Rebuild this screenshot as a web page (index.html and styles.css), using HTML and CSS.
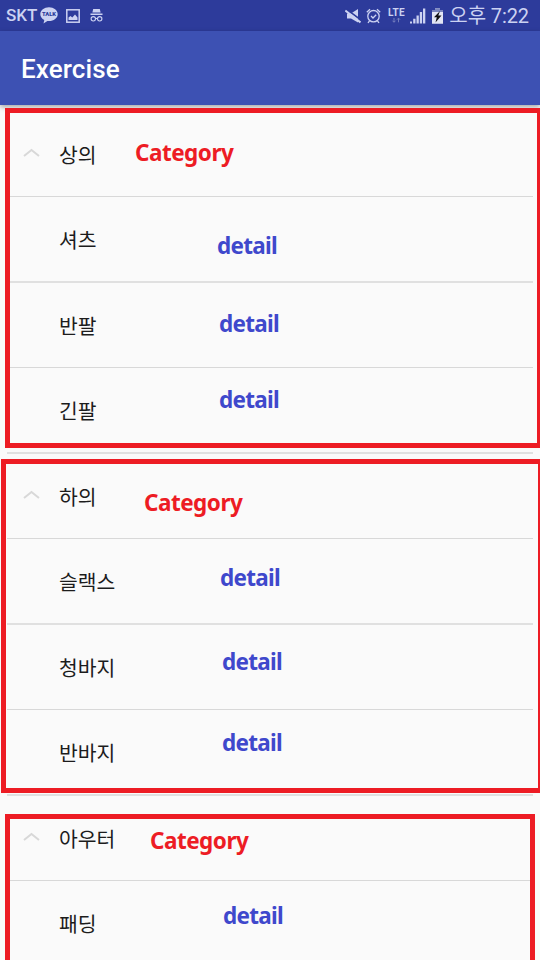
FILE: index.html
```html
<!DOCTYPE html>
<html lang="ko">
<head>
    <meta charset="UTF-8">
    <meta name="viewport" content="width=device-width, initial-scale=1.0">
    <title>Exercise</title>
    <link rel="stylesheet" href="styles.css">
</head>
<body>

<div class="status-bar">
    <span class="carrier">SKT</span>
    <svg class="icon-talk" width="18" height="17" viewBox="0 0 18 17">
        <path d="M9 .3C4.200.3.300 3.400.3 7.200c0 2.500 1.600 4.500 4 5.700L3.500 16.500l3.900-2.500 1.600.1c4.800 0 8.700-3.100 8.700-6.900S13.800.3 9 .3z" fill="#ccd2f2"/>
        <text x="9" y="9.300" text-anchor="middle" class="talk-text">TALK</text>
    </svg>
    <svg class="icon-image" width="14" height="14" viewBox="0 0 14 14">
        <rect x=".8" y=".8" width="12.400" height="12.400" fill="none" stroke="#ccd2f2" stroke-width="1.500"/>
        <path d="M2.500 11V8.500L4.500 7l1.800 1.500L9 5.500l2.500 3V11z" fill="#ccd2f2"/>
    </svg>
    <svg class="icon-spy" width="13" height="13" viewBox="0 0 13 13">
        <path d="M3.200 0h6.600l.8 3.500H2.400zM.5 4.500h12V6H.5z" fill="#ccd2f2"/>
        <g fill="none" stroke="#ccd2f2" stroke-width="1.100">
            <circle cx="3.300" cy="9.800" r="2.200"/>
            <circle cx="9.700" cy="9.800" r="2.200"/>
            <path d="M5.500 9.500h2"/>
        </g>
    </svg>
    <div class="status-right">
        <svg width="16" height="16" viewBox="0 0 16 16">
            <path d="M2 5.500h4L13 1v13.500L6 10.500H2z" fill="#ccd2f2"/>
            <path d="M1 .800l15 11.200" stroke="#2d3b9b" stroke-width="1.600"/>
            <path d="M.3 2.500l15.200 12" stroke="#ccd2f2" stroke-width="2"/>
        </svg>
        <svg class="icon-alarm" width="15" height="16" viewBox="0 0 15 16">
            <g fill="none" stroke="#ccd2f2" stroke-width="1.300">
                <circle cx="7.500" cy="8.200" r="5.700"/>
                <path d="M.8 4.200L4 1.200M14.200 4.200L11 1.200M3.500 12.800L2 15M11.500 12.800L13 15M5 8l2 2 3.200-3.300"/>
            </g>
        </svg>
        <svg class="icon-lte" width="17" height="16" viewBox="0 0 17 16">
            <text x="0" y="8" class="lte-text" textLength="16.500">LTE</text>
            <path d="M6 10v4M4.500 12.700L6 14.300l1.500-1.600M10.500 14.300v-4M9 11.700l1.500-1.600 1.500 1.600" fill="none" stroke="#737dbe"/>
        </svg>
        <svg class="icon-signal" width="16" height="16" viewBox="0 0 16 16">
            <path d="M0 15.500v-2h2v2zM3.200 15.500v-4.700h2.300v4.700zM6.500 15.500V7.500h2.300v8zM9.800 15.500V4h2.300v11.500zM13 15.500V.5h2.300v15z" fill="#ccd2f2"/>
        </svg>
        <svg class="icon-battery" width="11" height="16" viewBox="0 0 11 16">
            <path d="M0 2h3V.3h5V2h3v13.700H0z" fill="#e2e5f4"/>
            <path d="M0 2h3V.3h5V2h3v2H0z" fill="#7984bd"/>
            <path d="M8 3L2 9.300h2.800L3.500 14.500 9.500 7.500H6.300z" fill="#111"/>
        </svg>
        <span class="clock">오후 7:22</span>
    </div>
</div>

<div class="app-bar">Exercise</div>

<div class="list">
    <div class="row category">
        <svg class="chevron" width="17" height="10" viewBox="0 0 17 10"><path d="M1 8l7.500-6L16 8"/></svg>
        <span>상의</span>
    </div>
    <div class="row">셔츠</div>
    <div class="row">반팔</div>
    <div class="row">긴팔</div>
    <div class="row category">
        <svg class="chevron" width="17" height="10" viewBox="0 0 17 10"><path d="M1 8l7.500-6L16 8"/></svg>
        <span>하의</span>
    </div>
    <div class="row">슬랙스</div>
    <div class="row">청바지</div>
    <div class="row">반바지</div>
    <div class="row category">
        <svg class="chevron" width="17" height="10" viewBox="0 0 17 10"><path d="M1 8l7.500-6L16 8"/></svg>
        <span>아우터</span>
    </div>
    <div class="row">패딩</div>
</div>

<!-- notes drawn over the list -->
<div class="notes">
    <div class="box box-top"></div>
    <div class="box box-bottom"></div>
    <div class="box box-outer"></div>

    <span class="note red note-1">Category</span>
    <span class="note blue note-2">detail</span>
    <span class="note blue note-3">detail</span>
    <span class="note blue note-4">detail</span>
    <span class="note red note-5">Category</span>
    <span class="note blue note-6">detail</span>
    <span class="note blue note-7">detail</span>
    <span class="note blue note-8">detail</span>
    <span class="note red note-9">Category</span>
    <span class="note blue note-10">detail</span>
</div>

</body>
</html>
```
FILE: styles.css
```css
* {
    box-sizing: border-box;
}
body {
    margin: 0;
    position: relative;
    width: 540px;
    height: 960px;
    overflow: hidden;
    background: #fafafa;
    font-family: Roboto, "Noto Sans CJK KR", sans-serif;
}
.status-bar {
    display: flex;
    align-items: center;
    height: 31px;
    padding: 0 11px 0 6px;
    background: #2d3b9b;
    color: #ccd2f2;
}
.carrier {
    width: 34px;
    font-size: 17px;
    font-weight: 500;
    line-height: 31px;
}
.talk-text {
    font-family: Roboto, sans-serif;
    font-size: 5.8px;
    font-weight: 900;
    fill: #2d3b9b;
}
.icon-image {
    margin-left: 8px;
}
.icon-spy {
    margin-left: 10px;
}
.status-right {
    display: flex;
    align-items: center;
    margin-left: auto;
}
.icon-alarm {
    margin-left: 5px;
}
.icon-lte {
    margin-left: 7px;
}
.lte-text {
    font-family: Roboto, sans-serif;
    font-size: 10px;
    font-weight: 700;
    fill: #ccd2f2;
}
.icon-signal {
    margin-left: 5px;
}
.icon-battery {
    margin-left: 6px;
}
.clock {
    margin-left: 6px;
    padding-top: 2px;
    font-size: 20px;
    line-height: 31px;
    letter-spacing: -0.1px;
    white-space: nowrap;
}
.app-bar {
    position: relative;
    height: 74px;
    padding-left: 21px;
    background: #3d51b3;
    color: #fff;
    font-size: 26px;
    font-weight: 500;
    letter-spacing: 0.1px;
    line-height: 76px;
    box-shadow: 0 2px 5px rgba(0, 0, 0, 0.35);
}
.list {
    padding: 7px 7px 0;
}
.row {
    display: flex;
    align-items: center;
    height: 86px;
    padding: 0 0 1px 52px;
    border-bottom: 2px solid #e0e0e0;
    color: #1c1c1c;
    font-family: "Noto Sans CJK KR", sans-serif;
    font-size: 20.4px;
}
.row:nth-child(odd) {
    height: 85px;
    border-bottom: 1px solid #d8d8d8;
}
.row.category {
    padding-left: 16px;
}
.chevron {
    margin: 0 19px 2px 0;
    fill: none;
    stroke: #d8d8d8;
    stroke-width: 2;
}
.notes {
    position: absolute;
    top: 0;
    left: 0;
}
.box {
    position: absolute;
    border: 5px solid #ed1c24;
}
.box-top {
    top: 108px;
    left: 5px;
    width: 537px;
    height: 340px;
}
.box-bottom {
    top: 459px;
    left: 1px;
    width: 542px;
    height: 334px;
}
.box-outer {
    top: 814px;
    left: 5px;
    width: 530px;
    height: 160px;
}
.note {
    position: absolute;
    font-family: "Noto Sans", "Open Sans", sans-serif;
    font-size: 22.5px;
    font-weight: 700;
    line-height: 30px;
}
.red {
    color: #ed1c24;
    letter-spacing: -0.5px;
}
.blue {
    color: #3f48cc;
    letter-spacing: -0.7px;
}
.note-1 { top: 138px; left: 135px; }
.note-2 { top: 231px; left: 217px; }
.note-3 { top: 309px; left: 219px; }
.note-4 { top: 385px; left: 219px; }
.note-5 { top: 488px; left: 144px; }
.note-6 { top: 563px; left: 220px; }
.note-7 { top: 647px; left: 222px; }
.note-8 { top: 728px; left: 222px; }
.note-9 { top: 826px; left: 150px; }
.note-10 { top: 901px; left: 223px; }
```
